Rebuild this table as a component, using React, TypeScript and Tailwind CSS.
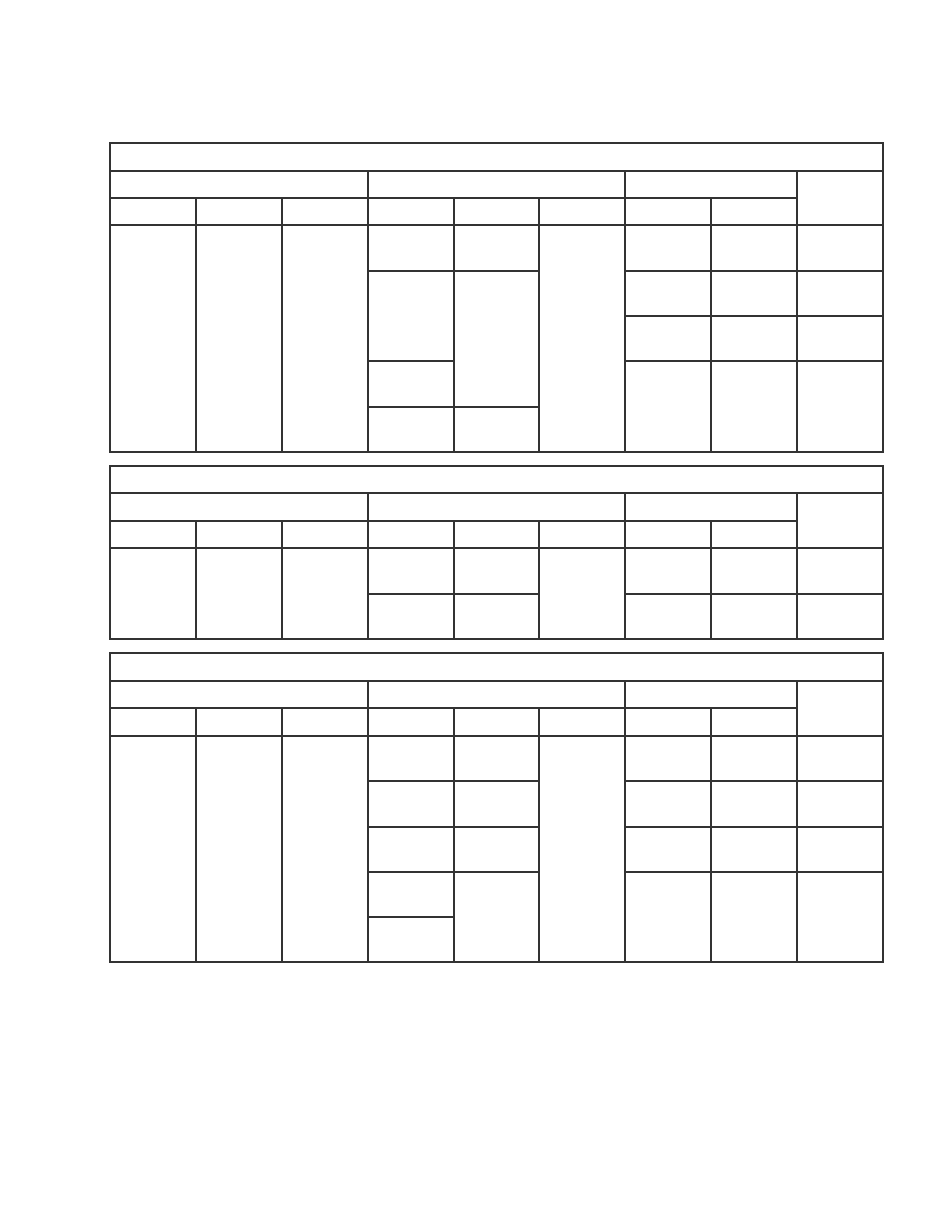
const tableOne = [
  "col-start-1 col-span-9 row-start-1",
  "col-start-1 col-span-3 row-start-2",
  "col-start-4 col-span-3 row-start-2",
  "col-start-7 col-span-2 row-start-2",
  "col-start-9 row-start-2 row-span-2",
  "col-start-1 row-start-3",
  "col-start-2 row-start-3",
  "col-start-3 row-start-3",
  "col-start-4 row-start-3",
  "col-start-5 row-start-3",
  "col-start-6 row-start-3",
  "col-start-7 row-start-3",
  "col-start-8 row-start-3",
  "col-start-1 row-start-4 row-span-5",
  "col-start-2 row-start-4 row-span-5",
  "col-start-3 row-start-4 row-span-5",
  "col-start-4 row-start-4",
  "col-start-4 row-start-5 row-span-2",
  "col-start-4 row-start-7",
  "col-start-4 row-start-8",
  "col-start-5 row-start-4",
  "col-start-5 row-start-5 row-span-3",
  "col-start-5 row-start-8",
  "col-start-6 row-start-4 row-span-5",
  "col-start-7 row-start-4",
  "col-start-7 row-start-5",
  "col-start-7 row-start-6",
  "col-start-7 row-start-7 row-span-2",
  "col-start-8 row-start-4",
  "col-start-8 row-start-5",
  "col-start-8 row-start-6",
  "col-start-8 row-start-7 row-span-2",
  "col-start-9 row-start-4",
  "col-start-9 row-start-5",
  "col-start-9 row-start-6",
  "col-start-9 row-start-7 row-span-2",
];

const tableTwo = [
  "col-start-1 col-span-9 row-start-1",
  "col-start-1 col-span-3 row-start-2",
  "col-start-4 col-span-3 row-start-2",
  "col-start-7 col-span-2 row-start-2",
  "col-start-9 row-start-2 row-span-2",
  "col-start-1 row-start-3",
  "col-start-2 row-start-3",
  "col-start-3 row-start-3",
  "col-start-4 row-start-3",
  "col-start-5 row-start-3",
  "col-start-6 row-start-3",
  "col-start-7 row-start-3",
  "col-start-8 row-start-3",
  "col-start-1 row-start-4 row-span-2",
  "col-start-2 row-start-4 row-span-2",
  "col-start-3 row-start-4 row-span-2",
  "col-start-4 row-start-4",
  "col-start-4 row-start-5",
  "col-start-5 row-start-4",
  "col-start-5 row-start-5",
  "col-start-6 row-start-4 row-span-2",
  "col-start-7 row-start-4",
  "col-start-7 row-start-5",
  "col-start-8 row-start-4",
  "col-start-8 row-start-5",
  "col-start-9 row-start-4",
  "col-start-9 row-start-5",
];

const tableThree = [
  "col-start-1 col-span-9 row-start-1",
  "col-start-1 col-span-3 row-start-2",
  "col-start-4 col-span-3 row-start-2",
  "col-start-7 col-span-2 row-start-2",
  "col-start-9 row-start-2 row-span-2",
  "col-start-1 row-start-3",
  "col-start-2 row-start-3",
  "col-start-3 row-start-3",
  "col-start-4 row-start-3",
  "col-start-5 row-start-3",
  "col-start-6 row-start-3",
  "col-start-7 row-start-3",
  "col-start-8 row-start-3",
  "col-start-1 row-start-4 row-span-5",
  "col-start-2 row-start-4 row-span-5",
  "col-start-3 row-start-4 row-span-5",
  "col-start-4 row-start-4",
  "col-start-4 row-start-5",
  "col-start-4 row-start-6",
  "col-start-4 row-start-7",
  "col-start-4 row-start-8",
  "col-start-5 row-start-4",
  "col-start-5 row-start-5",
  "col-start-5 row-start-6",
  "col-start-5 row-start-7 row-span-2",
  "col-start-6 row-start-4 row-span-5",
  "col-start-7 row-start-4",
  "col-start-7 row-start-5",
  "col-start-7 row-start-6",
  "col-start-7 row-start-7 row-span-2",
  "col-start-8 row-start-4",
  "col-start-8 row-start-5",
  "col-start-8 row-start-6",
  "col-start-8 row-start-7 row-span-2",
  "col-start-9 row-start-4",
  "col-start-9 row-start-5",
  "col-start-9 row-start-6",
  "col-start-9 row-start-7 row-span-2",
];

function FormTable({ cells, rows }: { cells: string[]; rows: string }) {
  return (
    <div className={`grid w-[775px] grid-cols-9 gap-[2px] border-2 border-[#333] bg-[#333] ${rows}`}>
      {cells.map((cell) => (
        <div key={cell} className={`bg-white ${cell}`} />
      ))}
    </div>
  );
}

export default function App() {
  return (
    <div className="min-h-[1210px] w-[935px] bg-white pl-[109px] pt-[142px]">
      <div className="flex flex-col gap-[12px]">
        <FormTable cells={tableOne} rows="grid-rows-[26px_25px_25px_44px_43px_43px_44px_43px]" />
        <FormTable cells={tableTwo} rows="grid-rows-[25px_26px_25px_44px_43px]" />
        <FormTable cells={tableThree} rows="grid-rows-[26px_25px_26px_43px_44px_43px_43px_43px]" />
      </div>
    </div>
  );
}
